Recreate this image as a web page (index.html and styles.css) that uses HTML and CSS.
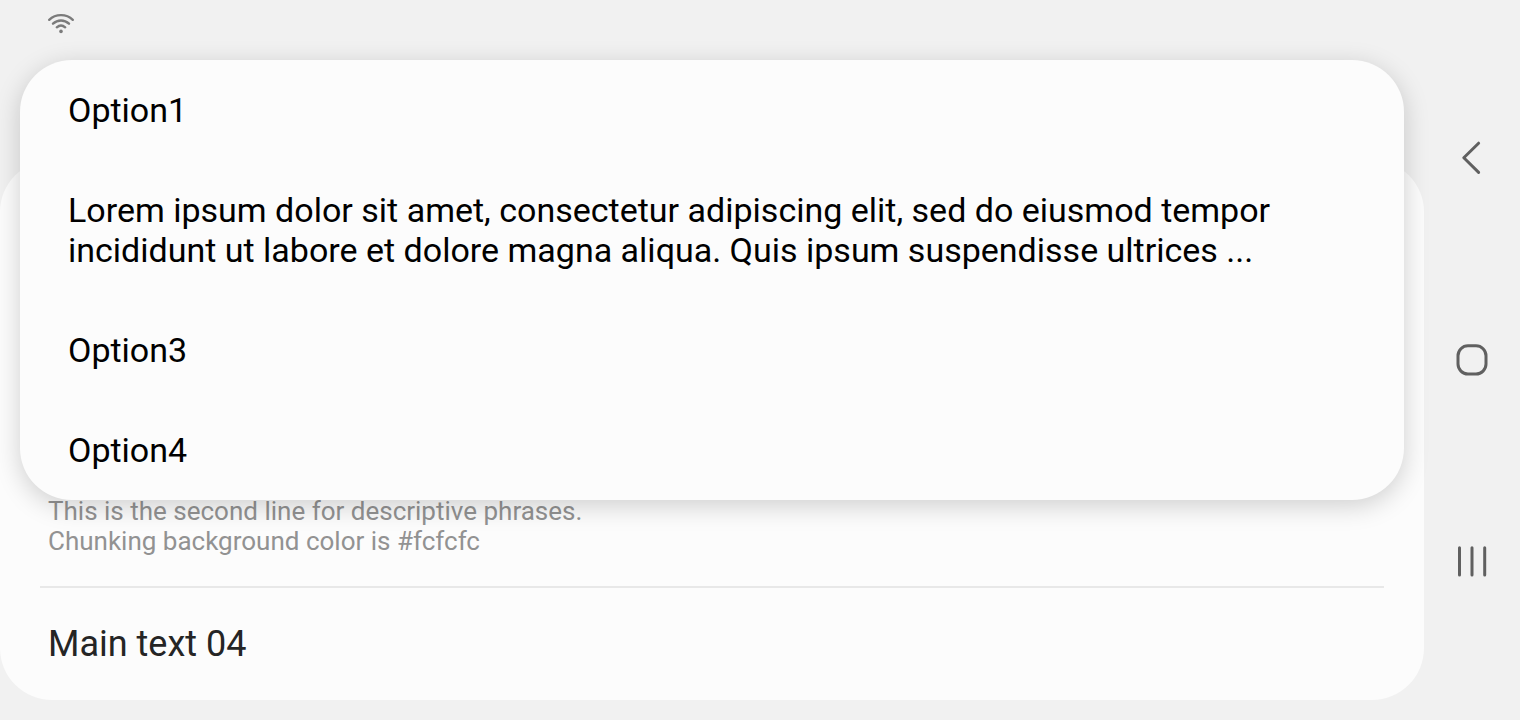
FILE: index.html
```html
<!DOCTYPE html>
<html lang="en">
<head>
<meta charset="utf-8">
<meta name="viewport" content="width=device-width, initial-scale=1">
<title>Options</title>
<link rel="stylesheet" href="styles.css">
</head>
<body>
<div class="screen">
  <main class="content">
    <header class="status">
      <svg class="wifi" viewBox="0 0 28 22" role="img" aria-label="Wi-Fi">
        <path d="M2.2 6.8C8.6.6 19.4.6 25.8 6.8M6 10.7c4.6-4.3 11.4-4.3 16 0M9.8 14.3c2.5-2.2 5.900-2.200 8.400 0"/>
        <circle cx="14" cy="18.4" r="1.8"/>
      </svg>
    </header>
    <section class="card">
      <div class="row">
        <p class="description">This is the second line for descriptive phrases.<br>Chunking background color is #fcfcfc</p>
      </div>
      <div class="row row-divided">
        <p class="title">Main text 04</p>
      </div>
    </section>
    <div class="menu">
      <button class="option" type="button">Option1</button>
      <button class="option" type="button">Lorem ipsum dolor sit amet, consectetur adipiscing elit, sed do eiusmod tempor incididunt ut labore et dolore magna aliqua. Quis ipsum suspendisse ultrices ...</button>
      <button class="option" type="button">Option3</button>
      <button class="option" type="button">Option4</button>
    </div>
  </main>
  <nav class="navbar">
    <button class="nav-button" type="button" aria-label="Back">
      <svg class="nav-icon" viewBox="0 0 40 40"><path d="M26.6 5.2 11.8 19.8 26.6 34.4"/></svg>
    </button>
    <button class="nav-button" type="button" aria-label="Home">
      <svg class="nav-icon" viewBox="0 0 40 40"><rect x="6" y="5.800" width="28" height="28.200" rx="10"/></svg>
    </button>
    <button class="nav-button" type="button" aria-label="Recents">
      <svg class="nav-icon" viewBox="0 0 40 40"><path d="M7.500 5.700v27.200M20 5.700v27.200M32.700 5.700v27.200"/></svg>
    </button>
  </nav>
</div>
</body>
</html>
```
FILE: styles.css
```css
* {
  box-sizing: border-box;
}

body {
  margin: 0;
  background: #f1f1f1;
  font-family: Roboto, "Liberation Sans", sans-serif;
}

.screen {
  display: flex;
  min-height: 100vh;
}

.content {
  position: relative;
  display: flex;
  flex: 1;
  flex-direction: column;
  padding-bottom: 20px;
}

.status {
  height: 160px;
  padding: 13px 47px;
}

.wifi {
  display: block;
  width: 28px;
  height: 22px;
  fill: none;
  stroke: #7b7b7b;
  stroke-width: 2.4;
  stroke-linecap: round;
}

.wifi circle {
  fill: #7b7b7b;
  stroke: none;
}

.card {
  display: flex;
  flex: 1;
  flex-direction: column;
  justify-content: flex-end;
  padding: 0 40px;
  border-radius: 52px;
  background: #fcfcfc;
}

.row {
  padding: 30px 8px;
}

.row-divided {
  border-top: 2px solid #e8e8e8;
}

.description,
.title {
  margin: 0;
}

.description {
  color: #929292;
  font-size: 26px;
  line-height: 30px;
}

.title {
  color: #252525;
  font-size: 36px;
  line-height: 52px;
}

.menu {
  position: absolute;
  top: 60px;
  right: 20px;
  left: 20px;
  display: flex;
  flex-direction: column;
  border-radius: 52px;
  background: #fcfcfc;
  box-shadow: 0 6px 26px rgba(0, 0, 0, 0.18);
}

.option {
  padding: 30px 48px;
  border: 0;
  background: none;
  color: #000;
  font-family: inherit;
  font-size: 34px;
  line-height: 40px;
  text-align: left;
}

.navbar {
  display: flex;
  flex-direction: column;
  justify-content: space-around;
  width: 96px;
  padding: 57px 0;
}

.nav-button {
  display: flex;
  align-items: center;
  justify-content: center;
  height: 80px;
  padding: 0;
  border: 0;
  background: none;
}

.nav-icon {
  width: 40px;
  height: 40px;
  fill: none;
  stroke: #606060;
  stroke-width: 3;
  stroke-linecap: round;
  stroke-linejoin: round;
}
```
